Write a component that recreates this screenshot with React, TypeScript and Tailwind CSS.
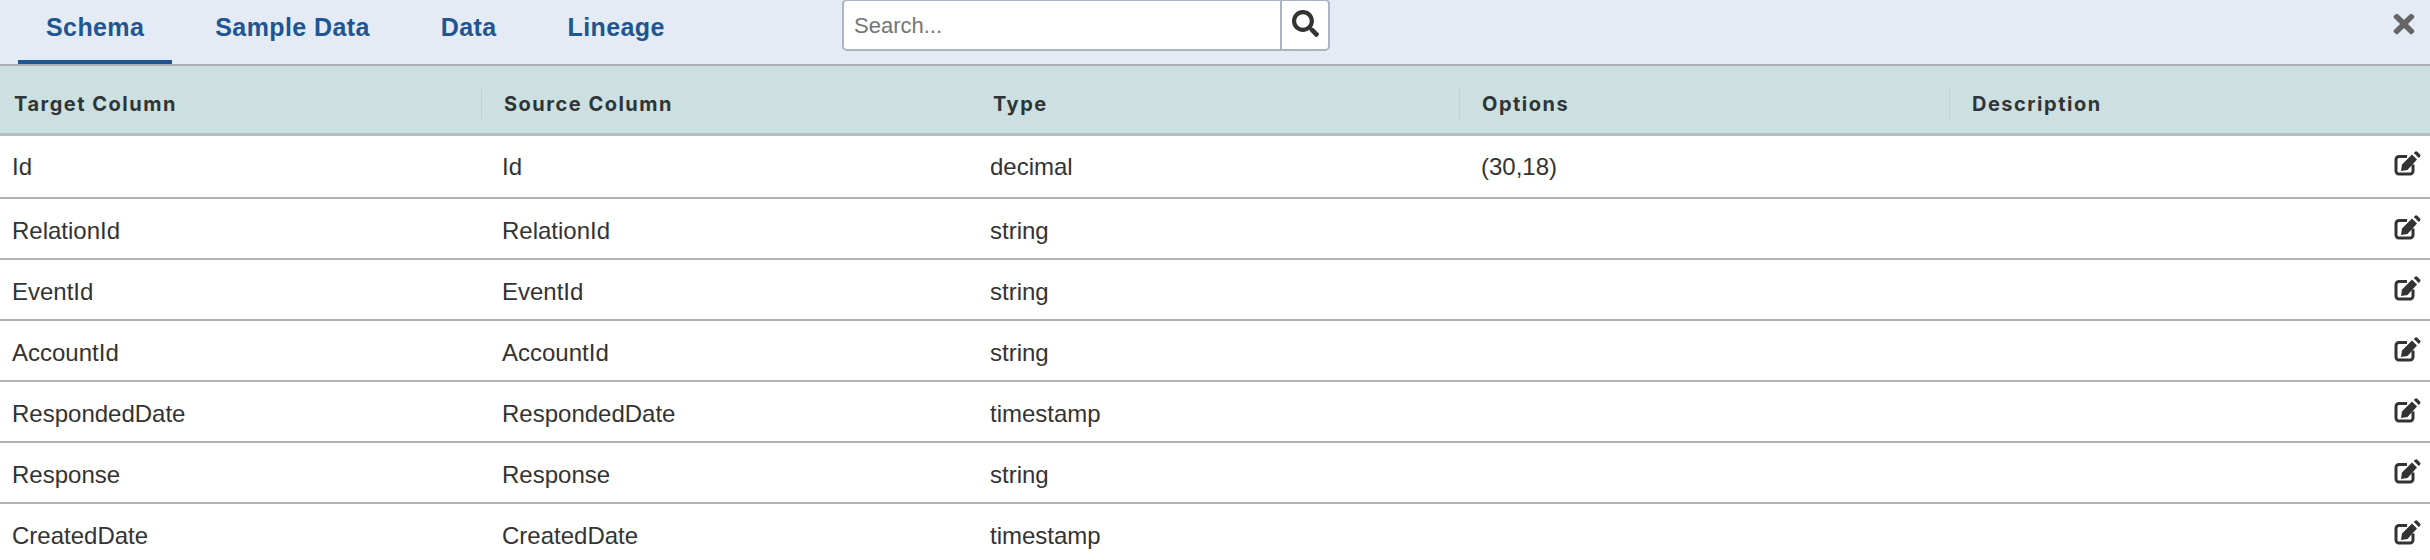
import { ReactNode } from "react";
import { FaSearch, FaTimes } from "react-icons/fa";

const tabs = ["Schema", "Sample Data", "Data", "Lineage"];

const rows = [
  { target: "Id", source: "Id", type: "decimal", options: "(30,18)" },
  { target: "RelationId", source: "RelationId", type: "string", options: "" },
  { target: "EventId", source: "EventId", type: "string", options: "" },
  { target: "AccountId", source: "AccountId", type: "string", options: "" },
  { target: "RespondedDate", source: "RespondedDate", type: "timestamp", options: "" },
  { target: "Response", source: "Response", type: "string", options: "" },
  { target: "CreatedDate", source: "CreatedDate", type: "timestamp", options: "" },
];

function HeaderCell({ label, divider, width }: { label: string; divider?: boolean; width: string }): ReactNode {
  return (
    <div className={`${width} flex items-center h-[30px] pl-[22px] ${divider ? "border-l border-[#bfd2d3]" : ""}`}>
      {label}
    </div>
  );
}

function EditIcon(): ReactNode {
  return (
    <svg width="27" height="25" viewBox="0 0 27 25" className="mr-[9px] -mt-[6px] text-[#333333]">
      <path
        d="M13 5.5H5a3 3 0 0 0-3 3V20a3 3 0 0 0 3 3h11a3 3 0 0 0 3-3v-6.5"
        fill="none"
        stroke="currentColor"
        strokeWidth="3"
      />
      <path d="M7 20l1-6.5L18 3.5l5 5L13.5 19z" fill="currentColor" />
      <path d="M19.8 2l1.2-1.2a1.8 1.8 0 0 1 2.4 0l2.6 2.6a1.8 1.8 0 0 1 0 2.4L24.8 7z" fill="currentColor" />
    </svg>
  );
}

function App(): ReactNode {
  return (
    <div className="w-[2430px] h-[560px] overflow-hidden bg-white text-[24px] text-[#333333] font-['Liberation_Sans',Arial,sans-serif]">
      {/* tab bar */}
      <div className="relative h-[66px] flex bg-[#e4ebf4] border-b-2 border-[#aeb0b2]">
        <div className="flex gap-[15px] pl-[18px] w-[842px]">
          {tabs.map((tab, idx) => (
            <div
              key={idx}
              className={`px-[28px] pt-[9px] h-[64px] text-[25px] font-bold text-[#1f5591] tracking-[0.4px] ${idx === 0 ? "border-b-4 border-[#1f5591]" : ""}`}>
              {tab}
            </div>
          ))}
        </div>

        {/* search */}
        <div className="flex h-[52px] -mt-[1px] w-[488px] bg-white border-2 border-[#a9b5c2] rounded-[5px]">
          <div className="w-[438px] pl-[10px] flex items-center text-[22px] text-[#757575] border-r-2 border-[#a9b5c2]">
            Search...
          </div>
          <div className="flex-1 flex items-center justify-center pb-[3px] text-[#333333]">
            <FaSearch size={27} />
          </div>
        </div>

        <FaTimes size={30} className="absolute right-[11px] top-[9px] text-[#666666]" />
      </div>

      {/* header */}
      <div className="h-[70px] pt-[8px] flex items-center bg-[#cde0e1] border-b-[3px] border-[#b3c2c3] font-['Inter',sans-serif] font-bold text-[20px] tracking-[1.5px] text-[#2f3537]">
        <div className="w-[481px] pl-[14px]">Target Column</div>
        <HeaderCell label="Source Column" divider width="w-[490px]" />
        <HeaderCell label="Type" width="w-[488px]" />
        <HeaderCell label="Options" divider width="w-[490px]" />
        <HeaderCell label="Description" divider width="flex-1" />
      </div>

      {/* rows */}
      {rows.map((row, idx) => (
        <div
          key={idx}
          className={`flex items-center pl-[12px] border-b-2 border-[#b2b2b2] ${idx === 0 ? "h-[63px]" : "h-[61px] pt-[4px]"}`}>
          <div className="w-[490px]">{row.target}</div>
          <div className="w-[488px]">{row.source}</div>
          <div className="w-[491px]">{row.type}</div>
          <div className="flex-1">{row.options}</div>
          <EditIcon />
        </div>
      ))}
    </div>
  );
}

export default App;
